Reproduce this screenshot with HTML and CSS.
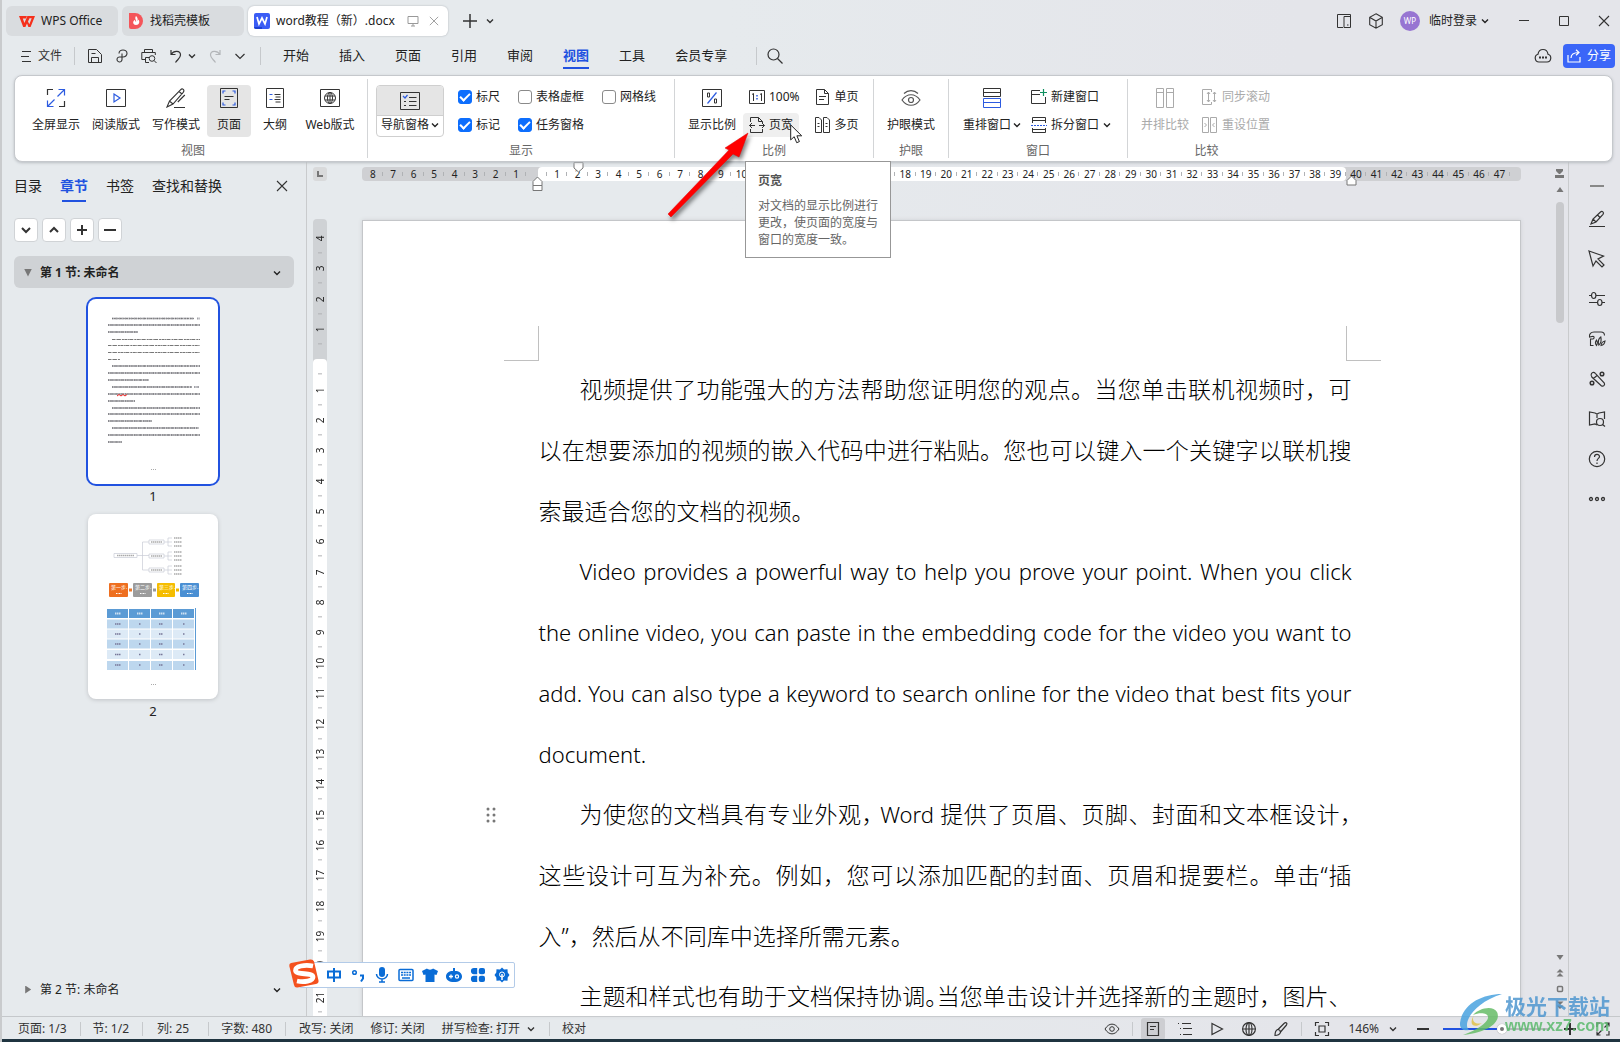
FILE: index.html
```html
<!DOCTYPE html>
<html lang="zh-CN">
<head>
<meta charset="utf-8">
<title>word教程（新）.docx - WPS Office</title>
<link rel="stylesheet" href="styles.css">
</head>
<body>
<svg class="sprite" aria-hidden="true">
  <symbol id="chev" viewBox="0 0 8 8"><path d="M1 2.5l3 3 3-3" fill="none" stroke="currentColor" stroke-width="1.4"/></symbol>
  <symbol id="globe" viewBox="0 0 16 16"><g fill="none" stroke="currentColor" stroke-width="1.2"><circle cx="8" cy="8" r="6.4"/><ellipse cx="8" cy="8" rx="3" ry="6.4"/><path d="M1.6 8h12.8M8 1.6v12.8"/></g></symbol>
  <symbol id="close" viewBox="0 0 12 12"><path d="M1 1l10 10M11 1L1 11" fill="none" stroke="currentColor" stroke-width="1.1"/></symbol>
</svg>

<header class="titlebar">
  <nav class="doc-tabs" aria-label="文档标签">
    <button class="doc-tab home"><svg width="16" height="12" viewBox="0 0 16 12"><path d="M0 1h8l-1.2 2.4H3.8L5.4 8 8.4 1H16l-4.4 11H9.4L8 8.4 6.4 12H4.2zM10.5 3.2L9 6.6l1.3 2.6 2.4-6z" fill="#f5301c"/></svg>WPS Office</button>
    <button class="doc-tab docer"><svg width="14" height="16" viewBox="0 0 14 16"><path d="M0 0h6a8 8 0 0 1 0 16H2a2 2 0 0 1-2-2z" fill="#f4555a"/><path d="M7 3c-2 3 1 4 0 6-.6-.6-1-1.500-1-2.200C3 8.500 4 12 7 12c3.500 0 4-3.500 2.500-5.500-.3 1-.8 1.300-1 1.500C9 6 8.500 4 7 3z" fill="#fff"/></svg>找稻壳模板</button>
    <button class="doc-tab active"><svg width="16" height="16" viewBox="0 0 16 16"><rect width="16" height="16" rx="2" fill="#3a5cf5"/><path d="M0 14h8v2H2a2 2 0 0 1-2-2z" fill="#1b3fd0"/><path d="M3 4l2 7 3-6 3 6 2-7" fill="none" stroke="#fff" stroke-width="1.700"/></svg><span>word教程（新）.docx</span><svg class="muted screen" width="12" height="12" viewBox="0 0 12 12"><path d="M1 1.500h10v7H1zM4 11h4M6 8.500V11" fill="none" stroke="currentColor"/></svg><svg class="muted" width="10" height="10"><use href="#close"/></svg></button>
  </nav>
  <button class="plain new-tab" aria-label="新建"><svg width="14" height="14" viewBox="0 0 14 14"><path d="M7 0v14M0 7h14" stroke="currentColor" stroke-width="1.500"/></svg></button>
  <button class="plain" aria-label="标签列表"><svg width="8" height="8"><use href="#chev"/></svg></button>
  <div class="window-tools">
    <button class="plain" aria-label="手机视图"><svg width="16" height="16" viewBox="0 0 16 16"><path d="M7 14.500H1.500v-13h13v13H8v-11h6.500M11 12h1.500" fill="none" stroke="currentColor"/></svg></button>
    <button class="plain" aria-label="应用"><svg width="16" height="16" viewBox="0 0 16 16"><path d="M8 .8l6.300 3.500v7.400L8 15.200l-6.300-3.500V4.300zM2 4.500L8 8l6-3.500M8 8v7" fill="none" stroke="currentColor" stroke-width="1.100"/></svg></button>
    <button class="plain account"><span class="avatar">WP</span>临时登录<svg width="8" height="8"><use href="#chev"/></svg></button>
    <button class="plain win" aria-label="最小化"><svg width="12" height="12" viewBox="0 0 12 12"><path d="M1 5.500h10" stroke="currentColor"/></svg></button>
    <button class="plain win" aria-label="最大化"><svg width="12" height="12" viewBox="0 0 12 12"><path d="M1.500 1.500h9v9h-9z" fill="none" stroke="currentColor"/></svg></button>
    <button class="plain win" aria-label="关闭"><svg width="12" height="12"><use href="#close"/></svg></button>
  </div>
</header>

<div class="menubar">
  <button class="plain file"><svg width="16" height="14" viewBox="0 0 16 14"><path d="M4 2.500h9M3 7.500h8M4 12.500h9" stroke="currentColor"/></svg>文件</button>
  <span class="bar"></span>
  <div class="quick">
    <button class="plain" aria-label="保存"><svg width="16" height="16" viewBox="0 0 16 16"><path d="M1.500 1.500h8l5 5v8h-13zM4.500 14.500v-5h7v5M4.500 5.500h4" fill="none" stroke="currentColor"/></svg></button>
    <button class="plain" aria-label="输出为PDF"><svg width="16" height="16" viewBox="0 0 16 16"><path d="M5 5.500a4 3.500 0 1 1 4 3.500H6a2.500 2.500 0 1 0 2 2.500V5.500" fill="none" stroke="currentColor" stroke-width="1.100"/></svg></button>
    <button class="plain" aria-label="打印预览"><svg width="16" height="16" viewBox="0 0 16 16"><path d="M3.500 4V1.500h8V4M4.500 11.500H.8V4.500h13.500V7M4.500 14.500v-5H8M4.500 14.500H8" fill="none" stroke="currentColor"/><circle cx="11" cy="10.500" r="2.800" fill="none" stroke="currentColor"/><path d="M13 12.500l2.500 2.500" stroke="currentColor"/></svg></button>
    <button class="plain" aria-label="撤消"><svg width="16" height="16" viewBox="0 0 16 16"><path d="M3 2v4.500h4.500M3 6.500C6 2 12.500 2.500 12.500 7c0 3-3 4.500-5 7.500" fill="none" stroke="currentColor" stroke-width="1.200"/></svg><svg width="8" height="8"><use href="#chev"/></svg></button>
    <button class="plain faint" aria-label="恢复" disabled><svg width="16" height="16" viewBox="0 0 16 16"><path d="M13 2v4.500H8.500M13 6.500C10 2 3.500 2.500 3.500 7c0 3 3 4.500 5 7.500" fill="none" stroke="currentColor" stroke-width="1.200"/></svg></button>
    <button class="plain" aria-label="自定义快速访问"><svg width="12" height="12" viewBox="0 0 12 12"><path d="M1.500 4L6 8.500 10.500 4" fill="none" stroke="currentColor" stroke-width="1.200"/></svg></button>
  </div>
  <span class="bar"></span>
  <nav class="menus">
    <a href="#">开始</a><a href="#">插入</a><a href="#">页面</a><a href="#">引用</a><a href="#">审阅</a><a href="#" class="on">视图</a><a href="#">工具</a><a href="#">会员专享</a>
  </nav>
  <span class="bar"></span>
  <button class="plain search" aria-label="搜索"><svg width="16" height="16" viewBox="0 0 16 16"><circle cx="6.500" cy="6.500" r="5.500" fill="none" stroke="currentColor" stroke-width="1.200"/><path d="M10.500 10.500l5 5" stroke="currentColor" stroke-width="1.200"/></svg></button>
  <button class="plain cloud" aria-label="云同步"><svg width="18" height="16" viewBox="0 0 18 16"><path d="M5 14a4 4 0 0 1-1-7.800C4.500 3 6.500 1.500 9 1.500s4.500 1.500 5 4.700A4 4 0 0 1 13 14z" fill="none" stroke="currentColor" stroke-width="1.200"/><path d="M5 9.500h2M8 9.500h2M11 9.500h2" stroke="currentColor" stroke-width="2"/></svg></button>
  <button class="share"><svg width="14" height="14" viewBox="0 0 14 14"><path d="M1 6v7h12V8M4 9c0-4 3-5.500 8-5.500M9 .8l3 2.700-3 2.800" fill="none" stroke="#fff" stroke-width="1.200"/></svg>分享</button>
</div>

<section class="ribbon" aria-label="视图">
  <div class="group g-view">
    <div class="tools">
      <button class="big"><svg width="20" height="20" viewBox="0 0 20 20"><path d="M1.500 7V1.500H7M18.500 13v5.500H13" fill="none" stroke="#333" stroke-width="1.200"/><path d="M11.500 8.500l7-7M12.500 1.500h6v6M8.500 11.500l-7 7M1.500 12.500v6h6" fill="none" stroke="#2c5be0" stroke-width="1.200"/></svg>全屏显示</button>
      <button class="big"><svg width="20" height="20" viewBox="0 0 20 20"><path d="M.5 1.500h19v17H.5z" fill="none" stroke="#333"/><path d="M8 6l6 4-6 4z" fill="none" stroke="#2c5be0" stroke-width="1.200"/></svg>阅读版式</button>
      <button class="big"><svg width="20" height="20" viewBox="0 0 20 20"><path d="M1 19l2.500-6L14.500 1.800c2-2 4.500.2 2.700 2.500L7 16zM4 13.500l3 2.500M13 3.500l3 2.500M18.800 7l-7 7M8 19.500h11" fill="none" stroke="#333" stroke-width="1.100"/></svg>写作模式</button>
      <button class="big narrow pressed"><svg width="20" height="20" viewBox="0 0 20 20"><path d="M1.500.5h17v19h-17z" fill="none" stroke="#333"/><path d="M4 5.500V3h2.500M13.500 3H16v2.500M4 14.500V17h2.500M13.500 17H16v-2.500" fill="none" stroke="#2c5be0" stroke-width="1.200"/><path d="M5.500 8.500h9M5.500 11.500h5" stroke="#333"/></svg>页面</button>
      <button class="big narrow"><svg width="20" height="20" viewBox="0 0 20 20"><path d="M1.500.5h17v19h-17z" fill="none" stroke="#333"/><path d="M4.500 6.500h3M4.500 11.500h3" stroke="#2c5be0"/><path d="M9.500 6.500h6M10.500 9h5M9.500 11.500h6M10.500 14h5" stroke="#333"/></svg>大纲</button>
      <button class="big wide"><svg width="20" height="20" viewBox="0 0 20 20"><path d="M.5 1.500h19v17H.5z" fill="none" stroke="#333"/><g fill="none" stroke="#333"><circle cx="10" cy="10" r="5.500"/><ellipse cx="10" cy="10" rx="2.500" ry="5.500"/><path d="M5 8h10M5 12h10M10 4.500v11"/></g></svg>Web版式</button>
    </div>
    <h2>视图</h2>
  </div>
  <div class="group g-show">
    <div class="tools">
      <button class="big nav-pane"><span class="upper"><svg width="20" height="20" viewBox="0 0 20 20"><path d="M.5 1.500h19v17H.5z" fill="none" stroke="#333"/><path d="M3 5l2 2 2.500-3" fill="none" stroke="#2c5be0" stroke-width="1.200"/><path d="M9 6.500h7.500M9 10.500h7.500M9 14.500h7.500M4 10.500h2M4 14.500h2" stroke="#333"/></svg></span><span class="with-chev">导航窗格<svg width="8" height="8"><use href="#chev"/></svg></span></button>
      <div class="checks">
        <label><input type="checkbox" checked>标尺</label><label><input type="checkbox">表格虚框</label><label><input type="checkbox">网格线</label>
        <label><input type="checkbox" checked>标记</label><label><input type="checkbox" checked>任务窗格</label>
      </div>
    </div>
    <h2>显示</h2>
  </div>
  <div class="group g-zoom">
    <div class="tools">
      <button class="big"><svg width="20" height="20" viewBox="0 0 20 20"><path d="M.5 1.500h19v17H.5z" fill="none" stroke="#333"/><path d="M14.500 4.500l-9 11" stroke="#2c5be0" stroke-width="1.200"/><path d="M5.500 5h2v4h-2zM12.500 11h2v4h-2z" fill="none" stroke="#333"/></svg>显示比例</button>
      <div class="stack">
        <button class="small"><svg width="16" height="16" viewBox="0 0 16 16"><path d="M.5 1.500h15v13H.5zM3 5.500l1.500-1V12M11 5.500l1.500-1V12" fill="none" stroke="#333"/><path d="M8 6v1.500M8 9v1.500" stroke="#2c5be0" stroke-width="1.500"/></svg>100%</button>
        <div class="hover-wrap">
          <button class="small hovered" aria-describedby="tip"><svg width="16" height="16" viewBox="0 0 16 16"><path d="M1.500 5V.5h8l4 4V6M9.500.5v4h4M1.500 12v3.500h12V12M.5 8.500H6M10 8.500h5.500M3 6L.5 8.500 3 11M13 6l2.500 2.500L13 11" fill="none" stroke="#333"/></svg>页宽</button>
          <div class="tooltip" id="tip" role="tooltip"><strong>页宽</strong><p>对文档的显示比例进行更改，使页面的宽度与窗口的宽度一致。</p></div>
          <svg class="arrow" width="86" height="92" viewBox="0 0 86 92"><path d="M4 84L65 20 61 18 84 3 75 27 69 24 7 87z" fill="#f00" stroke="#e00000" stroke-width=".5"/></svg>
          <svg class="cursor" width="13" height="20" viewBox="0 0 13 20"><path d="M.7.900v15l3.500-3.200 2.500 6 2.700-1.100-2.500-5.800h4.800z" fill="#fff" stroke="#222"/></svg>
        </div>
      </div>
      <div class="stack second">
        <button class="small"><svg width="16" height="16" viewBox="0 0 16 16"><path d="M1.500.5h8l4 4v11h-12zM9.500.5v4h4M4 7.500h7M4 10.500h5" fill="none" stroke="#333"/></svg>单页</button>
        <button class="small"><svg width="16" height="16" viewBox="0 0 16 16"><path d="M.5.5H4L6.500 3v12.500h-6zM8.500.5H12L14.500 3v12.500h-6zM2.500 6.500h2M2.500 9.500h2M10.500 6.500h2M10.500 9.500h2" fill="none" stroke="#333"/></svg>多页</button>
      </div>
    </div>
    <h2>比例</h2>
  </div>
  <div class="group g-eye">
    <div class="tools">
      <button class="big"><svg width="20" height="20" viewBox="0 0 20 20"><path d="M1 12c5-7 13-7 18 0-5 7-13 7-18 0zM3 5.500c4-3.800 10-3.800 14 0" fill="none" stroke="#555" stroke-width="1.200"/><circle cx="10" cy="12" r="2.500" fill="none" stroke="#555" stroke-width="1.200"/></svg>护眼模式</button>
    </div>
    <h2>护眼</h2>
  </div>
  <div class="group g-window">
    <div class="tools">
      <button class="big wide"><svg width="20" height="20" viewBox="0 0 20 20"><path d="M1.500.5h17v8h-17zM1.500 4.500h17" fill="none" stroke="#333"/><path d="M1.500 10.500h17v9h-17zM1.500 14.500h17" fill="none" stroke="#2c5be0"/></svg><span class="with-chev">重排窗口<svg width="8" height="8"><use href="#chev"/></svg></span></button>
      <div class="stack">
        <button class="small"><svg width="16" height="16" viewBox="0 0 16 16"><path d="M9 1.500H.5v13h14V8M.5 5.500H9" fill="none" stroke="#333"/><path d="M12.500 0v7M9 3.500h7" stroke="#0f9060" stroke-width="1.200"/></svg>新建窗口</button>
        <button class="small"><svg width="16" height="16" viewBox="0 0 16 16"><path d="M1.500 6V.5h13V6M1.500 3.500h13M1.500 11v4.500h13V11M1.500 12.500h13" fill="none" stroke="#333"/><path d="M0 8.500h16" stroke="#2c5be0" stroke-dasharray="2 1"/></svg>拆分窗口<svg width="8" height="8"><use href="#chev"/></svg></button>
      </div>
    </div>
    <h2>窗口</h2>
  </div>
  <div class="group g-compare">
    <div class="tools">
      <button class="big" disabled><svg width="20" height="20" viewBox="0 0 20 20"><path d="M1.500.5h7v19h-7zM11.500.5h7v19h-7zM1.500 4.500h7M11.500 4.500h7" fill="none" stroke="#aaa"/></svg>并排比较</button>
      <div class="stack">
        <button class="small" disabled><svg width="16" height="16" viewBox="0 0 16 16"><path d="M9.500 3V.5h-9v15h9V13M6.500 3v10M5 5l1.500-2L8 5M5 11l1.500 2L8 11M12.500 3v10M11 5l1.500-2L14 5M11 11l1.500 2 1.500-2" fill="none" stroke="#aaa"/></svg>同步滚动</button>
        <button class="small" disabled><svg width="16" height="16" viewBox="0 0 16 16"><path d="M.5.5h6v15h-6zM8.500.5h6v15h-6zM2.500 6l2 2-2 2M12.500 6l-2 2 2 2" fill="none" stroke="#aaa"/></svg>重设位置</button>
      </div>
    </div>
    <h2>比较</h2>
  </div>
</section>

<main class="workspace">
  <aside class="side">
    <nav class="side-tabs">
      <a href="#">目录</a><a href="#" class="on">章节</a><a href="#">书签</a><a href="#">查找和替换</a>
      <button class="plain" aria-label="关闭窗格"><svg width="12" height="12"><use href="#close"/></svg></button>
    </nav>
    <div class="side-tools">
      <button aria-label="下一节"><svg width="12" height="12" viewBox="0 0 12 12"><path d="M2 4l4 4 4-4"/></svg></button>
      <button aria-label="上一节"><svg width="12" height="12" viewBox="0 0 12 12"><path d="M2 8l4-4 4 4"/></svg></button>
      <button aria-label="新增节"><svg width="12" height="12" viewBox="0 0 12 12"><path d="M6 1v10M1 6h10"/></svg></button>
      <button aria-label="删除节"><svg width="12" height="12" viewBox="0 0 12 12"><path d="M0 6h12"/></svg></button>
    </div>
    <button class="section-head current"><span class="tri tri-down"></span>第 1 节: 未命名<svg width="8" height="8"><use href="#chev"/></svg></button>
    <figure class="thumb selected">
      <svg width="130" height="185" viewBox="0 0 130 185">
        <g fill="none" stroke="#a2a2a8" stroke-width="2.200" stroke-dasharray="1.500 .4 .8 .5 2 .3 1 .6 1.700 .5">
          <path d="M24 19.500h82M109 19.500h3M20 26h92M20 33h30"/>
          <path d="M24 67h88M20 74h92M20 81h41M24 88h80M106 88h5M20 95h92M20 102h27M24 109h88M20 115h92M20 122h44M24 129h87M20 136h92M20 143h14"/>
        </g>
        <g fill="none" stroke="#555" stroke-width=".6" stroke-dasharray="1 .7 2 1.100 .8 .5">
          <path d="M24 19.500h82M20 26h92M20 33h30M24 67h88M20 74h92M20 81h41M24 88h80M20 95h92M20 102h27M24 109h88M20 115h92M20 122h44M24 129h87M20 136h92M20 143h14"/>
        </g>
        <g fill="none" stroke="#777" stroke-width="1" stroke-dasharray="3 .5 1 .4 4 1 2 .5"><path d="M24 40.500h88M20 46.500h92M20 53.500h92M20 60.500h12"/></g>
        <path d="M29 97l2-1.500 2 1.500 2-1.500 2 1.500 2-1.500" fill="none" stroke="#e22"/>
        <path d="M63 170.500h5" stroke="#aaa" stroke-dasharray="1 1"/>
      </svg>
      <figcaption>1</figcaption>
    </figure>
    <figure class="thumb">
      <svg width="130" height="185" viewBox="0 0 130 185">
        <g fill="none" stroke="#c9ccd6" stroke-width=".7"><path d="M26 39.500h23v4H26zM49 41.500h12M54.500 28v28M54.500 28H61M54.500 56H61M61 26h15v4H61zM61 40h15v4H61zM61 54h15v4H61zM76 28h8M76 42h8M76 56h8M84 24h-4v8h4M84 38h-4v8h4M84 52h-4v8h4"/></g>
        <path d="M29 41.500h17M63 28h11M63 42h11M63 56h11M86 24h8M86 28h8M86 32h8M86 38h8M86 42h8M86 46h8M86 52h8M86 56h8M86 60h8" stroke="#aaa" stroke-width="1.400" stroke-dasharray="1.500 .5"/>
        <path d="M41 76h3" stroke="#ec7a2c" stroke-width="3"/><path d="M65 76h3" stroke="#999" stroke-width="3"/><path d="M88 76h3" stroke="#f0b800" stroke-width="3"/>
        <rect x="21" y="69" width="19" height="14" rx="1" fill="#ee6f20"/><rect x="45" y="69" width="19" height="14" rx="1" fill="#9c9c9c"/><rect x="69" y="69" width="18" height="14" rx="1" fill="#f5bd00"/><rect x="92" y="69" width="19" height="14" rx="1" fill="#4a8fd3"/>
        <g class="step-text"><text x="23" y="75">第一步.</text><text x="47" y="75">第二步.</text><text x="71" y="75">第三步.</text><text x="94" y="75">第四步.</text></g>
        <path d="M28 79.500h6M52 79.500h6M75 79.500h6M99 79.500h6" stroke="#fff" stroke-dasharray="1 .5"/>
        <g fill="none" stroke-dasharray="21 1">
          <path d="M19 99.500h87" stroke="#5b9bd5" stroke-width="9"/>
          <path d="M19 110h87M19 130h87M19 151.500h87" stroke="#bdd7ee" stroke-width="9"/>
          <path d="M19 120h87M19 140.500h87" stroke="#ddeaf6" stroke-width="9"/>
        </g>
        <path d="M107.500 94v62" stroke="#5b9bd5"/>
        <path d="M27 99.500h6M49 99.500h6M71 99.500h6M93 99.500h6" stroke="#fff" stroke-opacity=".7" stroke-width="2" stroke-dasharray="1.500 .5"/>
        <path d="M27 110h6M51 110h2M71 110h4M95 110h2M27 120h6M51 120h2M71 120h4M95 120h2M27 130h6M51 130h2M71 130h4M95 130h2M27 140.500h6M51 140.500h2M71 140.500h4M95 140.500h2M27 151h6M51 151h2M71 151h4M95 151h2" stroke="#779" stroke-width="1.500" stroke-dasharray="1.500 .5"/>
        <path d="M63 170.500h5" stroke="#aaa" stroke-dasharray="1 1"/>
      </svg>
      <figcaption>2</figcaption>
    </figure>
    <button class="section-head last"><span class="tri tri-right"></span>第 2 节: 未命名<svg width="8" height="8"><use href="#chev"/></svg></button>
  </aside>

  <section class="canvas">
    <span class="corner"><svg width="6" height="6" viewBox="0 0 6 6"><path d="M1 0v5h5" fill="none" stroke="#777" stroke-width="2"/></svg></span>
    <div class="ruler-h" aria-hidden="true">
      <span class="live"></span>
      <i>8</i><i>7</i><i>6</i><i>5</i><i>4</i><i>3</i><i>2</i><i>1</i><i></i><i>1</i><i>2</i><i>3</i><i>4</i><i>5</i><i>6</i><i>7</i><i>8</i><i>9</i><i>10</i><i>11</i><i>12</i><i>13</i><i>14</i><i>15</i><i>16</i><i>17</i><i>18</i><i>19</i><i>20</i><i>21</i><i>22</i><i>23</i><i>24</i><i>25</i><i>26</i><i>27</i><i>28</i><i>29</i><i>30</i><i>31</i><i>32</i><i>33</i><i>34</i><i>35</i><i>36</i><i>37</i><i>38</i><i>39</i><i>40</i><i>41</i><i>42</i><i>43</i><i>44</i><i>45</i><i>46</i><i>47</i>
      <svg class="mark first-line" width="11" height="11" viewBox="0 0 11 11"><path d="M1 .5h9V6l-4.500 4L1 6z"/></svg>
      <svg class="mark left-indent" width="11" height="16" viewBox="0 0 11 16"><path d="M5.500 1L10 5.500v4H1v-4zM1 9.500h9v5H1z"/></svg>
      <svg class="mark right-indent" width="11" height="11" viewBox="0 0 11 11"><path d="M5.500 1L10 5.500V10H1V5.500z"/></svg>
    </div>
    <div class="ruler-v" aria-hidden="true">
      <span class="live"></span>
      <i>4</i><i>3</i><i>2</i><i>1</i><i></i><i>1</i><i>2</i><i>3</i><i>4</i><i>5</i><i>6</i><i>7</i><i>8</i><i>9</i><i>10</i><i>11</i><i>12</i><i>13</i><i>14</i><i>15</i><i>16</i><i>17</i><i>18</i><i>19</i><i>20</i><i>21</i>
    </div>
    <article class="page">
      <div class="crop-marks"><span class="crop crop-left"></span><span class="crop crop-right"></span></div>
      <p><span class="line indent">视频提供了功能强大的方法帮助您证明您的观点。当您单击联机视频时，可</span><span class="line">以在想要添加的视频的嵌入代码中进行粘贴。您也可以键入一个关键字以联机搜</span><span class="line end">索最适合您的文档的视频。</span></p>
      <p class="latin"><span class="line indent">Video provides a powerful way to help you prove your point. When you click</span><span class="line">the online video, you can paste in the embedding code for the video you want to</span><span class="line">add. You can also type a keyword to search online for the video that best fits your</span><span class="line end">document.</span></p>
      <p><svg class="grip" width="10" height="16" viewBox="0 0 10 16"><g fill="#777"><circle cx="2" cy="2" r="1.500"/><circle cx="8" cy="2" r="1.500"/><circle cx="2" cy="8" r="1.500"/><circle cx="8" cy="8" r="1.500"/><circle cx="2" cy="14" r="1.500"/><circle cx="8" cy="14" r="1.500"/></g></svg><span class="line indent">为使您的文档具有专业外观<span class="half">，</span> <span class="latin">Word</span> 提供了页眉、页脚、封面和文本框设计<span class="half">，</span></span><span class="line">这些设计可互为补充。例如，您可以添加匹配的封面、页眉和提要栏。单击“插</span><span class="line end">入”，然后从不同库中选择所需元素。</span></p>
      <p><span class="line indent">主题和样式也有助于文档保持协调<span class="half">。</span>当您单击设计并选择新的主题时，图片、</span></p>
    </article>
    <div class="scroll">
      <svg width="10" height="10" viewBox="0 0 10 10"><path d="M1 0h7v2L5 5H4L1 2zM0 6h9v3H0z" fill="#777"/></svg>
      <svg class="up" width="8" height="6" viewBox="0 0 8 6"><path d="M4 0l3.500 5h-7z" fill="#777"/></svg>
      <span class="thumb-bar"></span>
      <div class="scroll-end">
        <svg width="8" height="6" viewBox="0 0 8 6"><path d="M4 5L.5 0h7z" fill="#777"/></svg>
        <svg width="8" height="8" viewBox="0 0 8 8"><path d="M4 0l3.500 3.500h-7zM4 4l3.500 3.500h-7z" fill="#777"/></svg>
        <svg width="8" height="8" viewBox="0 0 8 8"><rect x="1.500" y="1.500" width="5" height="5" rx="1" fill="none" stroke="#777" stroke-width="1.500"/></svg>
        <svg width="8" height="8" viewBox="0 0 8 8"><path d="M4 4L.5.5h7zM4 8L.5 4.500h7z" fill="#777"/></svg>
      </div>
    </div>
  </section>

  <aside class="rail">
    <button class="plain collapse" aria-label="收起"><svg width="18" height="12" viewBox="0 0 18 12"><path d="M2 6h14" stroke="#888" stroke-width="2"/></svg></button>
    <button class="plain" aria-label="样式"><svg width="18" height="18" viewBox="0 0 18 18"><path d="M1 16.500h16M3 14l2-5 7.500-7c1.600-1.500 4 .3 2.500 2.300L8 12zM5 9l3 3M9.500 5l3 3" fill="none" stroke="currentColor" stroke-width="1.200"/></svg></button>
    <button class="plain" aria-label="选择"><svg width="18" height="18" viewBox="0 0 18 18"><path d="M1 1l14.500 5-5.500 3 6 6-2 2-6-6-3 5z" fill="none" stroke="currentColor" stroke-width="1.200"/></svg></button>
    <button class="plain" aria-label="设置"><svg width="18" height="18" viewBox="0 0 18 18"><path d="M1 5.500h2.500M8 5.500h9M1 12.500h8.500M14 12.500h3" stroke="currentColor" stroke-width="1.200"/><ellipse cx="5.700" cy="5.500" rx="2.200" ry="3" fill="none" stroke="currentColor" stroke-width="1.200"/><ellipse cx="11.800" cy="12.500" rx="2.200" ry="3" fill="none" stroke="currentColor" stroke-width="1.200"/></svg></button>
    <button class="plain" aria-label="资源"><svg width="18" height="18" viewBox="0 0 18 18"><path d="M5.500 15.500h-3V9h2.500C6.500 8.500 6.500 6.500 5 6.200L1.500 7C1 4 3 2 6 2h7c2 0 3.500 1 3.500 3.500M8.500 15.500c-1.500-2-1.200-4 0-5.500 1 1.500 1.200 3.500 0 5.500zM10.800 15c-1-3.500 0-6.500 2-8 .8 3 .2 6-2 8zM13 15.500c.3-2.800 1.800-4 4-4.500-.3 2.500-1.700 4.200-4 4.500z" fill="none" stroke="currentColor" stroke-width="1.100"/></svg></button>
    <button class="plain" aria-label="工具箱"><svg width="18" height="18" viewBox="0 0 18 18"><path d="M3.500 3.500c1-1.500 2.700-1.500 3.800-.2l9 9.700c1 2-1 4-3 2.700L3.800 7C3 6 2.800 4.700 3.500 3.500zM9 5.500L5.500 8.500" fill="none" stroke="currentColor" stroke-width="1.200"/><circle cx="14" cy="4" r="1.800" fill="none" stroke="currentColor" stroke-width="1.500"/><circle cx="4" cy="13" r="1.800" fill="none" stroke="currentColor" stroke-width="1.500"/></svg></button>
    <button class="plain" aria-label="文档查阅"><svg width="18" height="18" viewBox="0 0 18 18"><path d="M9 15l-2-1-5.500 1V2l5.500 1 2 1 2-1 5.500-1v7M9 4v4" fill="none" stroke="currentColor" stroke-width="1.200"/><circle cx="12" cy="12" r="3.500" fill="none" stroke="currentColor" stroke-width="1.200"/><path d="M14.500 14.500l2.500 2" stroke="currentColor" stroke-width="1.200"/></svg></button>
    <button class="plain" aria-label="帮助"><svg width="18" height="18" viewBox="0 0 18 18"><circle cx="9" cy="9" r="7.700" fill="none" stroke="currentColor" stroke-width="1.200"/><path d="M6.500 7c0-3.500 5-3.300 5-.5C11.500 8.500 9 8.300 9 11M9 12.500V14" fill="none" stroke="currentColor" stroke-width="1.200"/></svg></button>
    <button class="plain" aria-label="更多"><svg width="18" height="18" viewBox="0 0 18 18"><g fill="none" stroke="currentColor" stroke-width="1.300"><circle cx="3" cy="9" r="1.500"/><circle cx="9" cy="9" r="1.500"/><circle cx="15" cy="9" r="1.500"/></g></svg></button>
  </aside>
</main>

<footer class="status">
  <span class="cell">页面: 1/3</span><span class="cell">节: 1/2</span><span class="cell col">列: 25</span><span class="cell">字数: 480</span>
  <div class="cell modes"><span>改写: 关闭</span><span>修订: 关闭</span><button class="plain">拼写检查: 打开<svg width="8" height="8"><use href="#chev"/></svg></button></div>
  <span class="proof">校对</span>
  <div class="views">
    <button class="plain view" aria-label="护眼模式"><svg width="16" height="16" viewBox="0 0 16 16"><path d="M1 8c4-6.500 10-6.500 14 0-4 6.500-10 6.500-14 0z" fill="none" stroke="currentColor"/><circle cx="8" cy="8" r="2.300" fill="none" stroke="currentColor"/></svg></button>
    <span class="bar"></span>
    <button class="plain view on" aria-label="页面视图"><svg width="14" height="14" viewBox="0 0 14 14"><path d="M1.500.5h11v13h-11zM4 4.500h6M4 7.500h4" fill="none" stroke="currentColor" stroke-width="1.200"/></svg></button>
    <button class="plain view" aria-label="大纲视图"><svg width="14" height="14" viewBox="0 0 14 14"><path d="M4 1.500h9M5 6.500h9M5 12.500h9M0 1.500h1M2 6.500h1M2 12.500h1" stroke="currentColor" stroke-width="1.200"/></svg></button>
    <button class="plain view" aria-label="阅读视图"><svg width="14" height="14" viewBox="0 0 14 14"><path d="M2 1.500L12.500 7 2 12.500z" fill="none" stroke="currentColor" stroke-width="1.200"/></svg></button>
    <button class="plain view" aria-label="Web视图"><svg width="16" height="16"><use href="#globe"/></svg></button>
    <button class="plain view" aria-label="写作视图"><svg width="16" height="16" viewBox="0 0 16 16"><path d="M2 14.500c0-3 .5-5 2.500-6 2 0 3 1.500 3 3C6.500 13.500 4 14.500 2 14.500zM5 8.500L11.500 2c1.500-1.200 3.200.5 2 2L7.500 11" fill="none" stroke="currentColor" stroke-width="1.200"/></svg></button>
    <span class="bar"></span>
    <button class="plain view" aria-label="最佳显示比例"><svg width="16" height="16" viewBox="0 0 16 16"><path d="M1.500 5V1.500H5M11 1.500h3.500V5M14.500 11v3.500H11M5 14.500H1.500V11M5 5h6v6H5z" fill="none" stroke="currentColor" stroke-width="1.200"/></svg></button>
    <button class="plain zoom-value">146%<svg width="8" height="8"><use href="#chev"/></svg></button>
    <button class="plain" aria-label="缩小"><svg width="12" height="12" viewBox="0 0 12 12"><path d="M0 6h12" stroke="currentColor" stroke-width="2"/></svg></button>
    <input class="zoom-slider" type="range" min="0" max="100" value="56" aria-label="显示比例">
    <button class="plain" aria-label="放大"><svg width="12" height="12" viewBox="0 0 12 12"><path d="M0 6h12M6 0v12" stroke="currentColor" stroke-width="2"/></svg></button>
    <button class="plain full" aria-label="全屏"><svg width="14" height="14" viewBox="0 0 14 14"><path d="M1 5V1h3M13 9v4h-3M8.500 5.500L13 1M9.500 1H13v3.500M5.500 8.500L1 13M1 9.500V13h3.500" fill="none" stroke="currentColor" stroke-width="1.200"/></svg></button>
  </div>
</footer>
<div class="taskbar-edge"></div>

<div class="ime">
  <svg class="ime-logo" width="32" height="32" viewBox="0 0 32 32"><path d="M3 5Q1 5.500 1.300 8L6 27q.7 3 3.500 2.500L28 26q3-.7 2.500-3.500L26 3.500Q25 1 22 1.500z" fill="#f4511e"/><path d="M25 8C17 6.500 7 8 7.500 12.500 8 17.500 25 14 25 19c0 4-9 5.500-16 4" fill="none" stroke="#fff" stroke-width="4.800"/></svg>
  <svg width="16" height="16" viewBox="0 0 16 16"><path d="M2 4.500h12v6H2zM8 1v14" fill="none" stroke="currentColor" stroke-width="2"/></svg>
  <svg width="16" height="16" viewBox="0 0 16 16"><circle cx="4.500" cy="5.500" r="1.800" fill="none" stroke="currentColor" stroke-width="1.500"/><path d="M10 8.500h3v3l-2 3" fill="none" stroke="currentColor" stroke-width="2"/></svg>
  <svg width="16" height="16" viewBox="0 0 16 16"><rect x="5" y="0" width="6" height="10" rx="3" fill="currentColor"/><path d="M2.500 7a5.500 5 0 0 0 11 0M8 12v3M5 15h6" fill="none" stroke="currentColor" stroke-width="1.500"/></svg>
  <svg width="16" height="16" viewBox="0 0 16 16"><rect x="1" y="2.500" width="14" height="11" rx="1" fill="none" stroke="currentColor" stroke-width="1.500"/><path d="M3 5.500h10M3 8h10" stroke="currentColor" stroke-width="1.500" stroke-dasharray="2 .7"/><path d="M4 11h8" stroke="currentColor" stroke-width="1.500"/></svg>
  <svg width="16" height="16" viewBox="0 0 16 16"><path d="M5 1.500c1 1.500 5 1.500 6 0L16 4l-1.500 4-2-.5V15h-9V7.500l-2 .5L0 4z" fill="currentColor"/></svg>
  <svg width="16" height="16" viewBox="0 0 16 16"><path d="M7 1h2v3c4 0 7 2 7 5.500S13 15 8 15 0 13 0 9.500 3 4 7 4z" fill="currentColor"/><path d="M3 9.500h4M5 7.500v4" stroke="#fff" stroke-width="1.300"/><circle cx="11" cy="9.500" r="1.600" fill="none" stroke="#fff" stroke-width="1.200"/></svg>
  <svg width="16" height="16" viewBox="0 0 16 16"><g fill="currentColor"><path d="M4 1h3.200v6.200H4a3 3 0 0 1 0-6.200zM4 8.800h3.200V15H4a3 3 0 0 1 0-6.200z"/><rect x="8.800" y="1" width="6.200" height="6.200" rx="2"/><rect x="8.800" y="8.800" width="6.200" height="6.200" rx="2"/></g></svg>
  <svg width="16" height="16" viewBox="0 0 16 16"><path d="M8 .5l2 2 3.500-.3.200 3.300L15.500 8l-1.800 2.500-.2 3.300-3.500-.3-2 2-2-2-3.500.3-.2-3.300L.5 8l1.800-2.500.2-3.300 3.500.3z" fill="currentColor"/><circle cx="8" cy="7.500" r="2.500" fill="none" stroke="#fff"/><path d="M8 7v6" stroke="#fff" stroke-width="1.500"/></svg>
</div>

<div class="watermark">
  <svg width="46" height="44" viewBox="0 0 46 44"><path d="M43 1C22 1 3 12 1 30c-.5 6 4 8 9 7C3 31 14 10 43 1z" fill="#4aa3e0"/><path d="M14 22c6-7 20-10 24-3 4 8-5 20-34 23 14-5 24-12 25-17 1-5-8-6-15-3z" fill="#67bd68"/><path d="M15 22c-3 6 1 10 8 8-8 6-14 2-8-8z" fill="#e2c34a"/></svg>
  <div><b>极光下载站</b><span>www.xz7.com</span></div>
</div>
</body>
</html>
```
FILE: styles.css
```css
* { box-sizing: border-box; }

body {
  margin: 0;
  height: 100vh;
  display: flex;
  flex-direction: column;
  overflow: hidden;
  position: relative;
  border-left: 2px solid #c9cbcd;
  background: linear-gradient(90deg, #e6eaed 0%, #e6eaed 45%, #e4e5ea 80%);
  color: #222;
  font: 12px/16px "Noto Sans", "Noto Sans CJK SC", sans-serif;
}

button { font: inherit; color: inherit; border: 0; background: none; padding: 0; white-space: nowrap; }
a { color: inherit; text-decoration: none; }
svg { flex: none; display: block; }
.sprite { position: absolute; width: 0; height: 0; }
.plain { display: flex; align-items: center; gap: 4px; color: #333; }
.with-chev { display: flex; align-items: center; gap: 2px; }
.bar { width: 1px; height: 18px; background: #c6c9cc; flex: none; }

/* title bar */
.titlebar { height: 42px; padding: 6px 4px 6px 4px; display: flex; align-items: center; }
.doc-tabs { display: flex; gap: 4px; }
.doc-tab { height: 30px; border-radius: 6px; background: #d9dcdf; display: flex; align-items: center; }
.home { width: 112px; padding-left: 13px; gap: 6px; }
.docer { width: 122px; padding-left: 7px; gap: 7px; }
.active { width: 200px; padding-left: 6px; gap: 6px; background: #fff; box-shadow: 0 0 2px #aaaeb4; }
.muted { color: #999; }
.active .screen { margin-left: auto; }
.active .muted:last-child { margin: 0 9px 0 4px; }
.new-tab { margin: 0 9px 0 15px; }
.window-tools { margin-left: auto; display: flex; align-items: center; gap: 16px; }
.account { gap: 9px; color: #222; }
.account svg { margin-left: -5px; }
.avatar { width: 20px; height: 20px; border-radius: 50%; background: #9775d2; color: #fff; font-size: 8px; line-height: 20px; text-align: center; }
.win { width: 24px; justify-content: center; }
.account + .win { margin-left: 7px; }

/* menu bar */
.menubar { height: 27px; margin-bottom: 6px; padding: 0 5px 0 16px; display: flex; align-items: center; }
.file { margin-right: 12px; }
.quick { display: flex; align-items: center; gap: 11px; margin: 0 14px 0 12px; }
.faint { color: #b3b6b9; }
.menus { display: flex; gap: 30px; margin: 0 29px 0 22px; font-size: 13px; }
.menus a { height: 27px; line-height: 27px; border-bottom: 2px solid transparent; }
.menus .on { color: #2152e0; border-color: #2152e0; font-weight: 700; }
.search { margin-left: 10px; }
.cloud { margin: 0 11px 0 auto; }
.share { width: 52px; height: 24px; border-radius: 4px; background: #3b66f8; color: #fff; display: flex; align-items: center; justify-content: center; gap: 6px; }

/* ribbon */
.ribbon { margin: 0 7px 0 12px; height: 87px; padding: 3px 0; display: flex; border: 1px solid #c5c8cc; border-radius: 8px; background: #fff; box-shadow: 0 1px 3px #b9bdc2; position: relative; z-index: 2; }
.group { height: 79px; padding: 6px 8px 0; border-right: 1px solid #d3d5d7; }
.group:last-child { border-right: 0; }
.group h2 { margin: 7px 0 0; font-size: 12px; font-weight: 400; line-height: 14px; color: #666; text-align: center; }
.g-view { width: 353px; padding-left: 12px; }
.g-show { width: 307px; }
.g-zoom { width: 199px; }
.g-eye { width: 75px; }
.g-window { width: 179px; }
.g-window .tools { margin-left: 4px; }
.g-compare { width: 157px; }
.tools { display: flex; gap: 2px; height: 52px; }
.big { width: 58px; height: 52px; border-radius: 4px; display: flex; flex-direction: column; align-items: center; padding-top: 3px; gap: 9px; flex: none; }
.narrow { width: 44px; }
.wide { width: 62px; }
.pressed { background: #e5e5e5; }
.big:disabled, .small:disabled { color: #aaa; }
.nav-pane { width: 68px; padding: 0; gap: 0; border: 1px solid #cfcfcf; overflow: hidden; }
.upper { width: 100%; height: 30px; background: #e5e5e5; border-bottom: 1px solid #cfcfcf; display: flex; align-items: center; justify-content: center; margin-bottom: 1px; }
.checks { display: grid; grid-template-columns: 60px 84px auto; grid-auto-rows: 24px; row-gap: 4px; margin-left: 12px; }
.checks label { display: flex; align-items: center; gap: 4px; white-space: nowrap; }
.checks input { appearance: none; width: 14px; height: 14px; margin: 0; border: 1px solid #8a8a8a; border-radius: 3px; background: #fff; display: grid; place-items: center; }
.checks input:checked { background: #0d6efd; border-color: #0d6efd; }
.checks input:checked::before { content: ""; width: 8px; height: 4px; border: solid #fff; border-width: 0 0 2px 2px; transform: translateY(-1px) rotate(-45deg); }
.stack { display: grid; grid-auto-rows: 24px; row-gap: 4px; justify-items: start; }
.second { margin-left: 1px; }
.small { height: 24px; padding: 0 6px; display: flex; align-items: center; gap: 4px; border-radius: 4px; }
.hovered { background: #efefef; }
.hover-wrap { position: relative; }
.tooltip { position: absolute; left: 2px; top: 48px; width: 146px; height: 97px; padding: 11px 12px 0; border: 1px solid #979797; background: #fff; color: #666; z-index: 3; }
.tooltip strong { display: block; color: #555; }
.tooltip p { margin: 8px 0 0; line-height: 17px; }
.arrow { position: absolute; left: -79px; top: 17px; z-index: 4; filter: drop-shadow(2px 3px 2px rgba(0, 0, 0, .5)); }
.cursor { position: absolute; left: 47px; top: 11px; z-index: 5; }

/* workspace */
.workspace { flex: 1; min-height: 0; display: flex; }
.side { width: 305px; flex: none; border-right: 1px solid #c9cbcd; padding: 12px 12px 0; display: flex; flex-direction: column; }
.side-tabs { display: flex; align-items: flex-start; gap: 18px; font-size: 14px; line-height: 24px; }
.side-tabs .on { color: #2152e0; font-weight: 700; position: relative; }
.side-tabs .on::after { content: ""; position: absolute; left: 2px; right: 2px; bottom: -4px; height: 2px; background: #2152e0; }
.side-tabs button { height: 24px; margin: 0 6px 0 auto; }
.side-tools { display: flex; gap: 4px; margin: 20px 0 14px; }
.side-tools button { width: 24px; height: 24px; border: 1px solid #d0d3d6; border-radius: 4px; background: #fff; display: grid; place-items: center; }
.side-tools path { fill: none; stroke: #333; stroke-width: 2; }
.section-head { width: 280px; height: 32px; flex: none; padding: 1px 13px 0 10px; border-radius: 6px; display: flex; align-items: center; gap: 8px; }
.section-head svg { margin-left: auto; }
.current { background: #cfd2d5; font-weight: 700; }
.last { margin: auto 0 11px; }
.tri { width: 8px; height: 8px; background: #777; }
.tri-down { clip-path: polygon(0 0, 100% 0, 50% 100%); }
.tri-right { clip-path: polygon(15% 0, 90% 50%, 15% 100%); }
.thumb { width: 134px; margin: 9px auto 0 72px; text-align: center; }
.thumb > svg { background: #fff; border-radius: 8px; margin: 2px; box-shadow: 0 1px 4px #c0c3c7; }
.thumb.selected > svg { box-shadow: 0 0 0 2px #2152e0; }
.thumb figcaption { margin-top: 4px; font-size: 13px; line-height: 16px; }
.thumb + .thumb { margin-top: 8px; }
.step-text { font-size: 5px; fill: #fff; }

/* document canvas */
.canvas { flex: 1; min-width: 0; display: grid; grid-template-columns: 14px 1fr 13px; grid-template-rows: 14px 1fr; row-gap: 38px; padding: 5px 0 0 6px; position: relative; }
.corner { background: #d9dadb; border-radius: 3px; display: grid; place-items: center; }
.ruler-h { width: 1159px; padding-left: 1px; padding-right: 11px; display: flex; justify-self: center; background: #cfd0d3; border-radius: 4px; position: relative; }
.ruler-h i, .ruler-v i { flex: 1 1 0; position: relative; font-style: normal; font-size: 10px; line-height: 14px; text-align: center; }
.ruler-h i::after { content: ""; position: absolute; right: 0; top: 5px; width: 1px; height: 4px; background: #b0b2b5; }
.ruler-h .live { position: absolute; left: 176px; width: 808px; top: 0; bottom: 0; background: #fff; border-radius: 4px; }
.mark { position: absolute; fill: #fff; stroke: #777; }
.first-line { left: 211px; top: -5px; }
.left-indent { left: 170px; top: 9px; }
.right-indent { left: 984px; top: 8px; }
.ruler-v { grid-column: 1; padding: 4px 0 4px; display: flex; flex-direction: column; background: #cfd2d5; border-radius: 4px 4px 0 0; position: relative; }
.ruler-v .live { position: absolute; left: 0; right: 0; top: 140px; bottom: 0; background: #fff; border-radius: 4px 4px 0 0; }
.ruler-v i { writing-mode: vertical-rl; transform: rotate(180deg); }
.ruler-v i::after { content: ""; position: absolute; top: 0; left: 5px; width: 4px; height: 1px; background: #b0b2b5; }
.page { width: 1159px; justify-self: center; margin-top: 1px; border: 1px solid #c4c6c9; border-bottom: 0; background: #fff; box-shadow: 0 0 4px #cfd1d4; overflow: hidden; min-height: 0; font-size: 23px; font-weight: 300; line-height: 61px; color: #000; }
.crop-marks { display: flex; justify-content: space-between; margin: 105px 139px -2px 141px; }
.crop { width: 35px; height: 35px; border: 0 solid #c0c0c0; border-bottom-width: 1px; }
.crop-left { border-right-width: 1px; }
.crop-right { border-left-width: 1px; }
.page p { margin: 0 168px -1px 176px; position: relative; }
.line { display: block; text-align: justify; text-align-last: justify; }
.indent { padding-left: 41px; }
.end { text-align-last: left; }
.latin { font-size: 22px; }
.half { font-feature-settings: "halt"; }
.grip { position: absolute; left: -53px; top: 23px; }
.scroll { grid-column: 3; grid-row: 1 / 3; padding: 2px 4px 0 0; display: flex; flex-direction: column; align-items: center; }
.up { margin-top: 8px; }
.thumb-bar { width: 8px; height: 121px; margin-top: 9px; border-radius: 4px; background: #c8c9cc; }
.scroll-end { margin-top: auto; padding-bottom: 7px; display: grid; gap: 8px; }

/* right rail */
.rail { width: 52px; flex: none; border-left: 1px solid #c9cbcd; padding: 18px 0 0 19px; display: flex; flex-direction: column; gap: 22px; }
.collapse { margin-bottom: -4px; }

/* status bar */
.status { height: 23px; flex: none; border-top: 1px solid #c5c8cb; padding: 1px 10px 0 4px; display: flex; align-items: center; color: #333; }
.cell { padding: 0 13px 0 12px; border-right: 1px solid #c6c9cc; line-height: 14px; white-space: nowrap; }
.cell.col { padding: 0 19px 0 14px; }
.cell.modes { display: flex; gap: 17px; padding: 0 14px 0 13px; }
.modes .plain { gap: 7px; }
.proof { padding-left: 12px; }
.views { margin-left: auto; display: flex; align-items: center; gap: 8px; }
.view { width: 24px; height: 22px; justify-content: center; border-radius: 3px; }
.view.on { background: #cdced2; }
.views .bar { height: 14px; }
.zoom-value { margin: 0 12px 0 6px; gap: 10px; }
.zoom-slider { appearance: none; width: 107px; height: 12px; margin: 0 6px; background: linear-gradient(#2152e0, #2152e0) 0 5px / 56px 2px no-repeat, linear-gradient(#b5b8bc, #b5b8bc) 0 5px / 100% 2px no-repeat; }
.zoom-slider::-webkit-slider-thumb { appearance: none; width: 10px; height: 10px; border: 3px solid #fff; border-radius: 50%; background: #777; box-shadow: 0 0 1px #888; }
.full { margin-left: 12px; }
.taskbar-edge { height: 3px; flex: none; background: #1f3440; }

/* floating input-method bar */
.ime { position: absolute; left: 297px; bottom: 54px; width: 216px; height: 26px; padding: 0 3px 0 26px; border: 1px solid #b3cbe8; border-radius: 2px; background: #fff; color: #0a6cd6; display: flex; align-items: center; gap: 8px; z-index: 6; }
.ime-logo { position: absolute; left: -12px; top: -5px; }

/* site mark */
.watermark { position: absolute; right: 10px; bottom: 5px; display: flex; opacity: .85; z-index: 7; }
.watermark b { display: block; font: 700 21px/24px "Noto Sans CJK SC", sans-serif; color: #4f97d0; }
.watermark span { display: block; font: 700 16px/18px "Liberation Sans", sans-serif; color: #5cba6e; }
```
